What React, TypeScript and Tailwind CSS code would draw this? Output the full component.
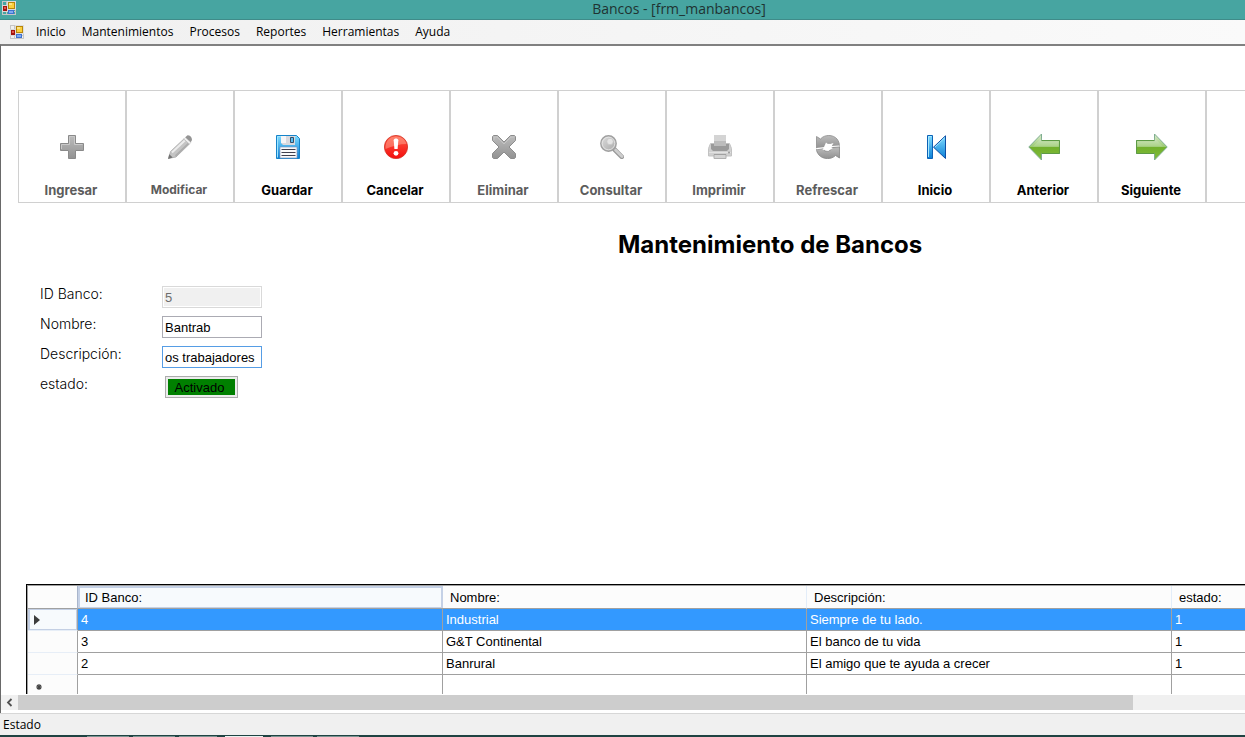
import React from "react";

const gothic = "font-[Inter,'Noto_Sans',sans-serif]";
const segoe = "font-['Open_Sans','Noto_Sans',sans-serif]";
const arial = "font-['Liberation_Sans',Arial,sans-serif]";

function FormIcon() {
  return (
    <svg width="14" height="14" viewBox="0 0 14 14" className="shrink-0" shapeRendering="crispEdges" aria-hidden="true">
      <path d="M.5 .5h13v13H.5zM4.5 .5v13M.5 4.5h13M9.5 .5v13M.5 10.5h13" fill="none" stroke="#c6c6c6" />
      <rect x="0" y="4" width="6" height="7" fill="#d9d9d9" />
      <rect x="1" y="5" width="4" height="5" fill="#a3150f" />
      <rect x="2" y="6" width="2" height="2" fill="#e0584b" />
      <rect x="5" y="0" width="9" height="9" fill="#ddd" />
      <rect x="6" y="1" width="7" height="7" fill="#b8860b" />
      <rect x="7" y="2" width="5" height="5" fill="#fbd03c" />
      <rect x="7" y="2" width="3" height="2" fill="#fde483" />
      <rect x="6" y="9" width="6" height="4" fill="#3f72d0" />
      <rect x="7" y="10" width="4" height="2" fill="#7faaf0" />
    </svg>
  );
}

function Gradients() {
  return (
    <svg width="0" height="0" className="absolute" aria-hidden="true">
      <defs>
        <linearGradient id="gray" x1="0" y1="0" x2="0" y2="1">
          <stop offset="0" stopColor="#bcbcbc" />
          <stop offset="1" stopColor="#929292" />
        </linearGradient>
        <linearGradient id="light" x1="0" y1="0" x2="1" y2="1">
          <stop offset="0" stopColor="#dedede" />
          <stop offset="1" stopColor="#a8a8a8" />
        </linearGradient>
        <linearGradient id="blue" x1="0" y1="0" x2="0" y2="1">
          <stop offset="0" stopColor="#7fdcff" />
          <stop offset="1" stopColor="#0b7fd6" />
        </linearGradient>
        <linearGradient id="red" x1="0" y1="0" x2="0" y2="1">
          <stop offset="0" stopColor="#ff5a45" />
          <stop offset="1" stopColor="#f40d0d" />
        </linearGradient>
        <linearGradient id="green" x1="0" y1="0" x2="0" y2="1">
          <stop offset="0" stopColor="#dcebd2" />
          <stop offset=".48" stopColor="#9ccb73" />
          <stop offset=".52" stopColor="#72b02c" />
          <stop offset="1" stopColor="#82bd3c" />
        </linearGradient>
      </defs>
    </svg>
  );
}

const icon = (children: React.ReactNode) => (
  <svg width="24" height="24" viewBox="0 0 24 24" aria-hidden="true">
    {children}
  </svg>
);

const arrow = (points: string, shaft: string, shine: string) => (
  <svg width="32" height="28" viewBox="0 0 32 28" className="shrink-0" aria-hidden="true">
    <path d={points} fill="url(#green)" stroke="#7fae90" />
    <path d={shaft} fill="none" stroke="#5d9a45" />
    <path d={shine} fill="#fff" fillOpacity=".15" />
  </svg>
);

const icons = {
  add: icon(
    <>
      <path d="M8.500.5h7v8h8v7h-8v8h-7v-8h-8v-7h8z" fill="url(#gray)" stroke="#8a8a8a" />
      <path d="M9.500 9.500v-8h5v8h8M1.500 14v-4.500h8" fill="none" stroke="#c9c9c9" />
    </>
  ),
  edit: icon(
    <>
      <path d="M.6 23.400 2.500 16.500 15.800 4l5.600 5L8 22z" fill="#c4c4c4" stroke="#a8a8a8" strokeWidth=".8" />
      <path d="M4 17.500 16.800 5.400" stroke="#ececec" strokeWidth="2" />
      <path d="M7.500 20.800 20.300 8.700" stroke="#acacac" strokeWidth="1.600" />
      <path d="m15.800 4 1.500-1.500 5.600 5L21.400 9z" fill="#f1f1f1" stroke="#b4b4b4" strokeWidth=".5" />
      <path d="M17.300 2.300 19.500.3C22 .3 24 2.300 24 5l-1.200 2.300z" fill="#949494" />
      <path d="m0 24 1.300-4.800 3.400 3.400z" fill="#747474" />
    </>
  ),
  save: icon(
    <>
      <path d="M.5.5h20l3 3v20H.5z" fill="url(#blue)" stroke="#1683c9" />
      <path d="M1.500 22.500v-21H20" fill="none" stroke="#a0e5ff" />
      <path d="M5 1h14v9H7l-2-2z" fill="#d9d9de" />
      <path d="M5 1h5v7H5z" fill="#f5f5f7" />
      <path d="M14.500 2.500h3v5h-3z" fill="#59bdf0" stroke="#344f68" />
      <path d="M4 12h17v11H4z" fill="#fafafa" stroke="#8297bc" strokeWidth=".7" />
      <path d="M5.500 14.500h14M5.500 17.500h14M5.500 20.500h14" stroke="#3f3f4d" />
    </>
  ),
  cancel: icon(
    <>
      <circle cx="12" cy="12" r="11.600" fill="url(#red)" stroke="#d33225" strokeWidth=".8" />
      <path d="M1.500 11C2.500 4.800 6.500 1.500 12 1.500S21.500 4.500 22.500 9C16 9 8 11 1.500 14z" fill="#ffb59f" fillOpacity=".45" />
      <path d="M9.700 5.200c0-2.200 4.600-2.200 4.600 0L13.600 14h-3.200z" fill="#fff" />
      <circle cx="12" cy="18.300" r="2.400" fill="#fff" />
    </>
  ),
  remove: icon(
    <>
      <path
        d="M1.500.5h4L12 7l6.500-6.500h4l1 1v4L17 12l6.500 6.500v4l-1 1h-4L12 17l-6.500 6.500h-4l-1-1v-4L7 12 .5 5.500v-4z"
        fill="url(#gray)"
        stroke="#8c8c8c"
      />
      <path d="M2 5V2h3l7 7 7-7h3" fill="none" stroke="#c5c5c5" />
    </>
  ),
  search: icon(
    <>
      <path d="m14.500 14.500 7.300 7.300" stroke="#9a9a9a" strokeWidth="4.600" strokeLinecap="round" />
      <path d="m15.500 15 6.500 6.500" stroke="#cecece" strokeWidth="2.800" strokeLinecap="round" />
      <circle cx="8.500" cy="8.500" r="7.700" fill="url(#light)" stroke="#a0a0a0" strokeWidth="1.400" />
      <circle cx="8.500" cy="8.500" r="6.300" fill="none" stroke="#e9e9e9" strokeWidth=".8" />
      <circle cx="10" cy="6.500" r="3.200" fill="#e4e4e4" stroke="#c4c4c4" strokeWidth=".7" />
    </>
  ),
  print: icon(
    <>
      <path d="M2.500 8.500h19l2 5v7.500H.5v-7.500z" fill="#d0d0d0" stroke="#c2c2c2" />
      <path d="M3 9h18v5l-2 2H5l-2-2z" fill="#9a9a9a" />
      <path d="M6 0h12v10H6z" fill="#d4d4d4" />
      <path d="M6 6h12v5H6z" fill="#bcbcbc" />
      <path d="M1 17.500h22" stroke="#e2e2e2" />
      <path d="M6 19.500h12v4H6z" fill="#d4d4d4" stroke="#b0b0b0" />
      <path d="M6 19.500h12" stroke="#a0a0a0" />
      <circle cx="21" cy="17.500" r=".9" fill="#909090" />
    </>
  ),
  refresh: icon(
    <>
      <path
        d="M.5 1.500 4.500 4C8.500-.7 17-.7 21 4c2 2.500 2.500 5 2.500 7.500L16 12c1-3-3-5-6.500-2.500L12 12 .5 13z"
        fill="url(#gray)"
        stroke="#8c8c8c"
        strokeWidth=".8"
      />
      <path
        d="M23.500 23 19.500 20.500C15.500 24.700 7 24.700 3 20 1 17.500.5 16 .5 14.200L8 13.500c-1 2.500 2.500 4 6.500 1.500L12 13l11.500-1z"
        fill="url(#gray)"
        stroke="#858585"
        strokeWidth=".8"
      />
      <path d="M.5 13.600 9 12.500l3 1.500 4-2.500 7.500-.5" fill="none" stroke="#fff" strokeWidth="1.200" />
      <path d="m8 12 2-4.500 2.500 2L17.500 8 15 12.500l2 .5-5 3-2-1.500-3.500.5z" fill="#fff" />
    </>
  ),
  first: icon(
    <>
      <path d="M3.500.5h5v23h-5z" fill="url(#blue)" stroke="#0c62b6" />
      <path d="M4.500 22V1.500h3" fill="none" stroke="#a9e9ff" />
      <path d="M9.500 12.200 21.500.8v22.700z" fill="url(#blue)" stroke="#0d4fa5" />
      <path d="M11 12 20.500 3" fill="none" stroke="#9fe4ff" />
    </>
  ),
  prev: arrow("M.8 14 13.500 1v6.500h18v13h-18V27z", "M13.500 7.500h18v13h-18", "M5 13.500 13.500 5v3.500h17v5z"),
  next: arrow("M31.200 14 18.500 1v6.500H.5v13h18V27z", "M18.500 7.500H.5v13h18", "M27 13.500 18.500 5v3.500h-17v5z"),
};

const tools = [
  { label: "Ingresar", icon: icons.add, off: true },
  { label: "Modificar", icon: icons.edit, off: true, small: true },
  { label: "Guardar", icon: icons.save },
  { label: "Cancelar", icon: icons.cancel },
  { label: "Eliminar", icon: icons.remove, off: true },
  { label: "Consultar", icon: icons.search, off: true },
  { label: "Imprimir", icon: icons.print, off: true },
  { label: "Refrescar", icon: icons.refresh, off: true },
  { label: "Inicio", icon: icons.first },
  { label: "Anterior", icon: icons.prev },
  { label: "Siguiente", icon: icons.next },
];

const menus = ["Inicio", "Mantenimientos", "Procesos", "Reportes", "Herramientas", "Ayuda"];

const rows = [
  ["4", "Industrial", "Siempre de tu lado.", "1"],
  ["3", "G&T Continental", "El banco de tu vida", "1"],
  ["2", "Banrural", "El amigo que te ayuda a crecer", "1"],
  ["", "", "", ""],
];

const field = `h-[22px] w-[100px] border px-[2px] text-[13px] leading-5 outline-none ${arial}`;
const formRow = "flex h-[30px] items-start";
const formLabel = `w-[122px] text-[14px] font-light leading-4 text-black ${gothic}`;

function Toolbar() {
  return (
    <div className="ml-[17px] mt-11 flex shrink-0 overflow-hidden">
      {tools.map((t) => (
        <button
          key={t.label}
          disabled={t.off}
          className={`flex h-[113px] w-[108px] shrink-0 flex-col items-center border border-[#d0d0d0] pt-[42px] ${gothic}`}
        >
          <span className="flex h-7 items-center">{t.icon}</span>
          <span
            className={`mt-5 pr-[2px] font-bold leading-[18px] ${t.small ? "text-[12px]" : "text-[13px]"} ${
              t.off ? "text-[#5c5c5c]" : "text-black"
            }`}
          >
            {t.label}
          </span>
        </button>
      ))}
      <div className="h-[113px] w-[108px] shrink-0 border border-[#d0d0d0]" />
    </div>
  );
}

function BankForm() {
  return (
    <form className="ml-[39px] mt-[23px] flex flex-col" onSubmit={(e) => e.preventDefault()}>
      <div className={formRow}>
        <label htmlFor="id" className={formLabel}>ID Banco:</label>
        <input id="id" disabled defaultValue="5" className={`${field} border-[#d9d9d9] bg-[#f0f0f0] text-[#6d6d6d] ring-1 ring-inset ring-white`} />
      </div>
      <div className={formRow}>
        <label htmlFor="nombre" className={formLabel}>Nombre:</label>
        <input id="nombre" defaultValue="Bantrab" className={`${field} border-[#ababb3] text-black`} />
      </div>
      <div className={formRow}>
        <label htmlFor="descripcion" className={formLabel}>Descripción:</label>
        <input id="descripcion" defaultValue="os trabajadores" className={`${field} border-[#569de5] text-black`} />
      </div>
      <div className={formRow}>
        <span className={formLabel}>estado:</span>
        <button type="button" className={`ml-[3px] h-[22px] w-[73px] border border-[#acacac] bg-[#ececec] p-[2px] text-[13px] text-black ${arial}`}>
          <span className="block h-4 overflow-hidden bg-[#008000] pr-1 leading-[18px]">Activado</span>
        </button>
      </div>
    </form>
  );
}

function BankGrid() {
  const head = "h-[23px] border-b border-[#a0a0a0] p-0 text-left font-normal";
  const plainHead = `${head} pl-[7px] pt-px`;
  return (
    <div className="ml-[25px] mt-auto h-[110px] shrink-0 overflow-hidden border-l border-t border-black">
      <div className="border-l border-t border-[#a0a0a0]">
        <table className={`w-[1509px] table-fixed border-separate border-spacing-0 text-[13px] leading-5 text-black ${arial}`}>
          <colgroup>
            <col className="w-[50px]" />
            <col className="w-[365px]" />
            <col className="w-[364px]" />
            <col className="w-[365px]" />
            <col className="w-[365px]" />
          </colgroup>
          <thead>
            <tr className="bg-[#fcfcfc]">
              <th className={`${head} border-r border-r-[#a9b5cb]`} />
              <th className={head}>
                <div className="h-[22px] border-2 border-b border-[#c5d1e6] bg-[#f7fafd] pl-[5px] leading-[19px]">ID Banco:</div>
              </th>
              <th className={`${plainHead} border-r border-r-[#e3edf9]`}>Nombre:</th>
              <th className={`${plainHead} border-r border-r-[#e3edf9]`}>Descripción:</th>
              <th className={plainHead}>estado:</th>
            </tr>
          </thead>
          <tbody>
            {rows.map((r, i) => (
              <tr key={i} className={i === 0 ? "bg-[#3399ff] text-white" : "bg-white"}>
                <th className="h-[22px] border-b border-r border-b-[#e7eef7] border-r-[#a0a0a0] bg-[#fcfcfc] p-0">
                  {i === 0 && (
                    <div className="flex h-[21px] items-center border border-l-2 border-[#c3cfe4] bg-[#f7fafd] pl-1">
                      <svg width="6" height="10" viewBox="0 0 6 10" aria-hidden="true">
                        <path d="M0 0 6 5 0 10z" fill="#3c3c3c" />
                      </svg>
                    </div>
                  )}
                  {i === 3 && (
                    <div className="flex pl-2 pt-[2px]">
                      <svg width="6" height="6" viewBox="0 0 6 6" aria-hidden="true">
                        <path d="M3 0v6M0 3h6M1 1l4 4M5 1 1 5" stroke="#444" strokeWidth="1.200" />
                      </svg>
                    </div>
                  )}
                </th>
                {r.map((c, j) => (
                  <td key={j} className="h-[22px] border-b border-r border-[#a0a0a0] p-0 pl-[3px] pt-px leading-5">
                    {c}
                  </td>
                ))}
              </tr>
            ))}
          </tbody>
        </table>
      </div>
    </div>
  );
}

export default function App() {
  return (
    <div className="flex h-screen flex-col overflow-hidden bg-white">
      <Gradients />
      <header className={`flex h-5 shrink-0 items-start border-b border-[#3f8b89] bg-[#47a5a1] pl-[2px] pt-px ${segoe}`}>
        <FormIcon />
        <h1 className="flex-1 pl-[97px] text-center text-[14px] leading-4 text-[#1f3332]">Bancos - [frm_manbancos]</h1>
      </header>
      <nav className={`flex h-6 shrink-0 items-center bg-linear-to-r from-[#f0f0f0] to-[#fafafa] pl-[10px] ${segoe}`}>
        <FormIcon />
        <div className="ml-3 flex gap-4">
          {menus.map((m) => (
            <button key={m} className="text-[12px] leading-5 text-black">{m}</button>
          ))}
        </div>
      </nav>
      <main className="flex min-h-0 flex-1 flex-col border-l border-t-2 border-l-[#696969] border-t-[#808080]">
        <Toolbar />
        <h2 className={`ml-[617px] mt-6 text-[24px] font-bold leading-9 text-black ${gothic}`}>Mantenimiento de Bancos</h2>
        <BankForm />
        <BankGrid />
        <div className="mb-[3px] mt-px flex h-[15px] shrink-0 bg-[#f0f0f0]">
          <button aria-label="Desplazar a la izquierda" className="flex w-[17px] items-center justify-center">
            <svg width="7" height="9" viewBox="0 0 7 9" aria-hidden="true">
              <path d="M5.500 1 2 4.500 5.500 8" fill="none" stroke="#505050" strokeWidth="1.800" />
            </svg>
          </button>
          <div className="flex-1">
            <div className="h-full w-10/11 bg-[#cdcdcd]" />
          </div>
        </div>
      </main>
      <footer className={`h-[22px] shrink-0 border-t border-[#d7d7d7] bg-[#f0f0f0] pl-[3px] text-[12px] leading-[22px] text-black ${segoe}`}>
        Estado
      </footer>
      <div className="flex h-[2px] shrink-0 items-end gap-1 bg-[#1f4342] pl-[87px]">
        <div className="h-px w-[42px] bg-[#7b9492]" />
        <div className="h-px w-[42px] bg-[#7b9492]" />
        <div className="h-px w-[38px] bg-[#7b9492]" />
        <div className="ml-1 h-px w-[38px] bg-[#e9f2f1]" />
        <div className="ml-1 h-px w-[42px] bg-[#7b9492]" />
        <div className="h-px w-[42px] bg-[#7b9492]" />
      </div>
    </div>
  );
}
